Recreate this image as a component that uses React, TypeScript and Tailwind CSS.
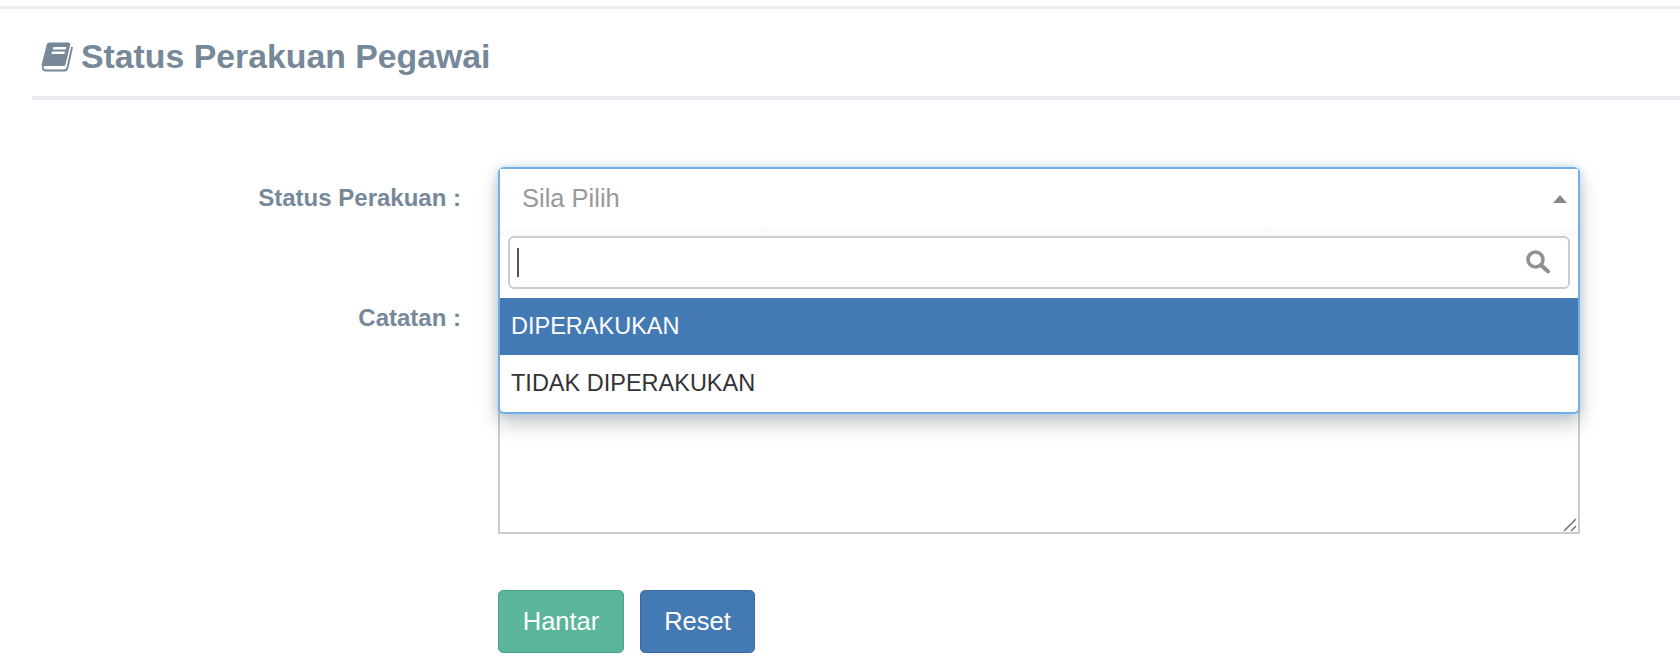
const FONT = "font-['Liberation_Sans',Arial,sans-serif]";

const options = ["DIPERAKUKAN", "TIDAK DIPERAKUKAN"];

function BookIcon() {
  return (
    <svg viewBox="0 0 34 30" className="h-[30px] w-[32px] shrink-0" aria-hidden="true" preserveAspectRatio="none">
      <path
        fill="#778899"
        fillRule="evenodd"
        d="M9 0.5H29C30.6 0.5 31.3 1.6 31 3L26 22.5C25.7 23.5 25 24 24 24H5C3.4 24 2.4 24.6 2 25.5L1 24C0.6 23.4 0.6 23 0.8 22L6 3C6.4 1.5 7.5 0.5 9 0.5ZM13.2 5L12.6 7.4H26.2L26.8 5ZM11.8 9.6L11.2 12H24.8L25.4 9.6Z"
      />
      <path
        fill="none"
        stroke="#778899"
        strokeWidth="2"
        d="M33 5L28.2 25.5C27.7 27.5 26.2 28.6 24.2 28.6H5.5C3 28.6 1.5 27 2 25"
      />
    </svg>
  );
}

function SearchGlyph() {
  return (
    <svg viewBox="0 0 24 24" className="absolute top-[12px] right-[18px] h-[24px] w-[24px]" aria-hidden="true">
      <circle cx="9.5" cy="9.5" r="7.5" fill="none" stroke="#909090" strokeWidth="3.5" />
      <path d="M15.5 15.5L22 21.5" stroke="#909090" strokeWidth="4" strokeLinecap="round" />
    </svg>
  );
}

export default function App() {
  return (
    <div className={`${FONT} h-[669px] overflow-hidden bg-white pt-[6px] pl-[32px]`}>
      <div className="-ml-[32px] h-[3px] bg-[#eceef2]" />

      <header className="flex h-[91px] items-center gap-[8px] border-b-[4px] border-[#e9ebf0] pt-[8px] pl-[9px]">
        <BookIcon />
        <h1 className="text-[33.8px] font-bold text-[#778899]">Status Perakuan Pegawai</h1>
      </header>

      <form className="mt-[67px] grid grid-cols-[429px_1082px] gap-x-[37px]">
        <label className="pt-[16px] text-right text-[24px] leading-[30px] font-bold text-[#778899]">
          Status Perakuan :
        </label>
        <div className="relative z-10 h-[58px]">
          <div className="absolute inset-x-0 top-0 h-[247px] rounded-[6px] border-2 border-[#74aee6] bg-white shadow-[0_0_10px_rgba(102,175,233,0.4),0_10px_20px_rgba(0,0,0,0.22)]">
            <div className="relative flex h-[67px] items-start bg-gradient-to-b from-white from-[80%] to-[#f9f9f9] pt-[14px] pl-[22px] text-[25.5px] leading-[30px] text-[#999999]">
              Sila Pilih
              <span className="absolute top-[26px] right-[11px] h-0 w-0 border-x-[7px] border-b-[8px] border-x-transparent border-b-[#888888]" />
            </div>
            <div className="relative mx-[8px] h-[53px] rounded-[6px] border-2 border-[#cccccc]">
              <span className="absolute top-[10px] left-[7px] h-[29px] w-[2px] bg-[#555555]" />
              <SearchGlyph />
            </div>
            <ul className="mt-[9px] text-[23.5px]">
              {options.map((o, i) => (
                <li
                  key={o}
                  className={`flex h-[57px] items-center px-[11px] ${
                    i === 0 ? "bg-[#447ab4] text-white" : "text-[#333333]"
                  }`}
                >
                  {o}
                </li>
              ))}
            </ul>
          </div>
        </div>

        <label className="mt-[78px] text-right text-[24px] leading-[30px] font-bold text-[#778899]">
          Catatan :
        </label>
        <div className="relative mt-[75px]">
          <textarea className="block h-[234px] w-full resize-none border-2 border-[#cccccc] bg-white outline-none" />
          <svg viewBox="0 0 14 14" className="absolute right-[3px] bottom-[2px] h-[14px] w-[14px]" aria-hidden="true">
            <path d="M1 13L13 1M8 13L13 8" stroke="#777777" strokeWidth="1.6" />
          </svg>
        </div>

        <div className="col-start-2 mt-[56px] flex gap-[16px]">
          <button
            type="button"
            className="h-[63px] w-[126px] rounded-[5px] border border-[#4ba586] bg-[#5ab59b] text-[25.5px] text-white"
          >
            Hantar
          </button>
          <button
            type="button"
            className="h-[63px] w-[115px] rounded-[5px] border border-[#3a6ca3] bg-[#447ab4] text-[25.5px] text-white"
          >
            Reset
          </button>
        </div>
      </form>
    </div>
  );
}
